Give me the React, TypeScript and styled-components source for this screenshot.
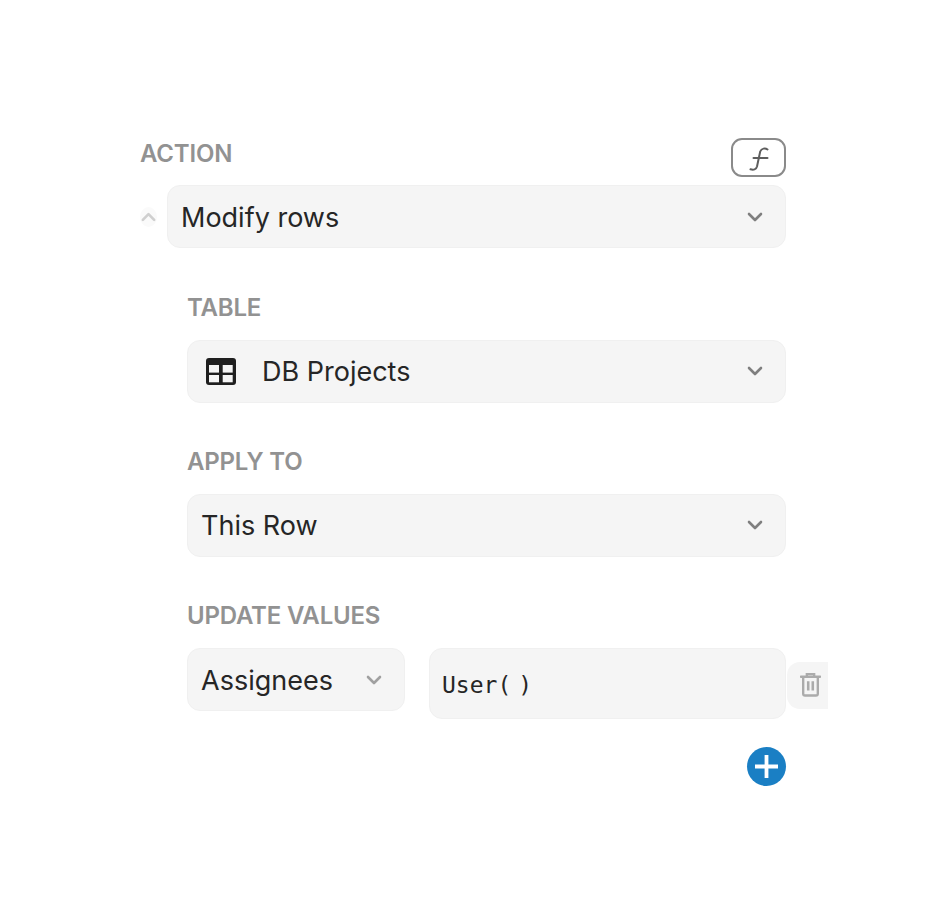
import React from "react";
import styled, { createGlobalStyle } from "styled-components";

const Global = createGlobalStyle`
  html, body { margin: 0; padding: 0; background: #fff; }
  body { font-family: Inter, "Liberation Sans", sans-serif; }
`;

const Page = styled.div`
  width: 940px;
  height: 920px;
  box-sizing: border-box;
  padding: 138px 154px 0 140px;
  overflow: hidden;
`;

const HeaderRow = styled.div`
  display: flex;
  justify-content: space-between;
  align-items: flex-start;
  height: 47px;
`;

const Label = styled.div`
  font-size: 24px;
  line-height: 30px;
  padding-top: 1px;
  font-weight: 600;
  color: #929292;
  letter-spacing: -0.2px;
`;

const FormulaButton = styled.div`
  width: 55px;
  height: 39px;
  box-sizing: border-box;
  border: 2px solid #8a8a8a;
  border-radius: 11px;
  display: flex;
  align-items: center;
  justify-content: center;
`;

const ActionRow = styled.div`
  display: flex;
  align-items: center;
  gap: 10px;
`;

const Collapse = styled.div`
  width: 17px;
  height: 20px;
  border-radius: 50%;
  background: #fafafa;
  display: flex;
  align-items: center;
  justify-content: center;
  flex: none;
`;

const Select = styled.div<{ $width?: number; $tight?: boolean }>`
  flex: ${(p) => (p.$width ? `0 0 ${p.$width}px` : "1 0 auto")};
  height: 63px;
  box-sizing: border-box;
  background: #f5f5f5;
  border: 1px solid #f0f0f0;
  border-radius: 13px;
  padding: 0 21px ${(p) => (p.$tight ? "1px" : "0")} 13px;
  padding-top: ${(p) => (p.$tight ? "0" : "1px")};
  display: flex;
  align-items: center;
  justify-content: space-between;
  color: #262626;
  font-size: 27px;
`;

const SelectValue = styled.div`
  display: flex;
  align-items: center;
  gap: 26px;
`;

const TableGlyph = styled.svg`
  margin-left: 5px;
  display: block;
`;

const Nested = styled.div`
  margin: 44px 0 0 47px;
  display: flex;
  flex-direction: column;
  gap: 43px;
`;

const Field = styled.div`
  display: flex;
  flex-direction: column;
  gap: 17px;
`;

const ValueRow = styled.div`
  display: flex;
  align-items: flex-start;
  gap: 24px;
`;

const CodeInput = styled.div`
  flex: 1;
  height: 71px;
  box-sizing: border-box;
  background: #f5f5f5;
  border: 1px solid #f0f0f0;
  border-radius: 13px;
  padding: 20px 12px 0;
  font-family: "DejaVu Sans Mono", "Liberation Mono", monospace;
  font-size: 23px;
  line-height: 32px;
  color: #262626;
`;

const CloseParen = styled.span`
  margin-left: 7px;
`;

const ValueCell = styled.div`
  flex: 1;
  display: flex;
  align-items: flex-start;
  margin-right: -42px;
`;

const TrashButton = styled.div`
  width: 41px;
  height: 47px;
  margin: 14px 0 0 1px;
  flex: none;
  background: #f5f5f5;
  border-radius: 13px 0 0 13px;
  display: flex;
  align-items: center;
  justify-content: center;
  padding: 0 0 2px 6px;
  box-sizing: border-box;
`;

const AddRow = styled.div`
  display: flex;
  justify-content: flex-end;
  margin-top: 28px;
`;

const AddButton = styled.div`
  width: 39px;
  height: 39px;
  border-radius: 50%;
  background: #1a7fc4;
  display: flex;
  align-items: center;
  justify-content: center;
`;

const Chevron = ({ color = "#7f7f7f" }: { color?: string }) => (
  <svg width="18" height="12" viewBox="0 0 18 12" fill="none">
    <path d="M3 3l6 6 6-6" stroke={color} strokeWidth="2.6" strokeLinecap="round" strokeLinejoin="round" />
  </svg>
);

const TableIcon = () => (
  <TableGlyph width="30" height="27" viewBox="0 0 30 27">
    <rect x="0" y="0" width="30" height="27" rx="3" fill="#1f1f1f" />
    <rect x="3" y="7" width="10" height="7.6" fill="#f5f5f5" />
    <rect x="16.7" y="7" width="10" height="7.6" fill="#f5f5f5" />
    <rect x="3" y="17" width="10" height="7.3" fill="#f5f5f5" />
    <rect x="16.7" y="17" width="10" height="7.3" fill="#f5f5f5" />
  </TableGlyph>
);

const TrashIcon = () => (
  <svg width="21" height="25" viewBox="0 0 23 27" fill="none" stroke="#ababab" strokeWidth="2.6">
    <path d="M1 5h21" strokeLinecap="round" />
    <path d="M7.5 5V2.2h8V5" />
    <path d="M3.5 5v18.5a2 2 0 0 0 2 2h12a2 2 0 0 0 2-2V5" />
    <path d="M9 10v10M14 10v10" strokeWidth="2.8" />
  </svg>
);

const FunctionIcon = () => (
  <svg width="20" height="26" viewBox="0 0 20 26" fill="none" stroke="#5e5e5e" strokeWidth="2" strokeLinecap="round">
    <path d="M18.5 4.5c-2-1.5-6-1.5-7.3 2L8 21.5c-.8 3-3.5 3.8-6.5 2.8" />
    <path d="M4.5 13h14" />
  </svg>
);

export default function App() {
  return (
    <Page>
      <Global />
      <HeaderRow>
        <Label>ACTION</Label>
        <FormulaButton>
          <FunctionIcon />
        </FormulaButton>
      </HeaderRow>
      <ActionRow>
        <Collapse>
          <svg width="17" height="12" viewBox="0 0 18 12" fill="none">
            <path d="M3 9l6-6 6 6" stroke="#cfcfcf" strokeWidth="2.8" strokeLinecap="round" strokeLinejoin="round" />
          </svg>
        </Collapse>
        <Select>
          <span>Modify rows</span>
          <Chevron />
        </Select>
      </ActionRow>
      <Nested>
        <Field>
          <Label>TABLE</Label>
          <Select $tight>
            <SelectValue>
              <TableIcon />
              <span>DB Projects</span>
            </SelectValue>
            <Chevron />
          </Select>
        </Field>
        <Field>
          <Label>APPLY TO</Label>
          <Select $tight>
            <span>This Row</span>
            <Chevron />
          </Select>
        </Field>
        <Field>
          <Label>UPDATE VALUES</Label>
          <ValueRow>
            <Select $width={218}>
              <span>Assignees</span>
              <Chevron color="#a0a0a0" />
            </Select>
            <ValueCell>
              <CodeInput>
                User(<CloseParen>)</CloseParen>
              </CodeInput>
              <TrashButton>
                <TrashIcon />
              </TrashButton>
            </ValueCell>
          </ValueRow>
        </Field>
      </Nested>
      <AddRow>
        <AddButton>
          <svg width="27" height="27" viewBox="0 0 27 27">
            <path d="M13.5 2v23M2 13.5h23" stroke="#fff" strokeWidth="3.8" />
          </svg>
        </AddButton>
      </AddRow>
    </Page>
  );
}
